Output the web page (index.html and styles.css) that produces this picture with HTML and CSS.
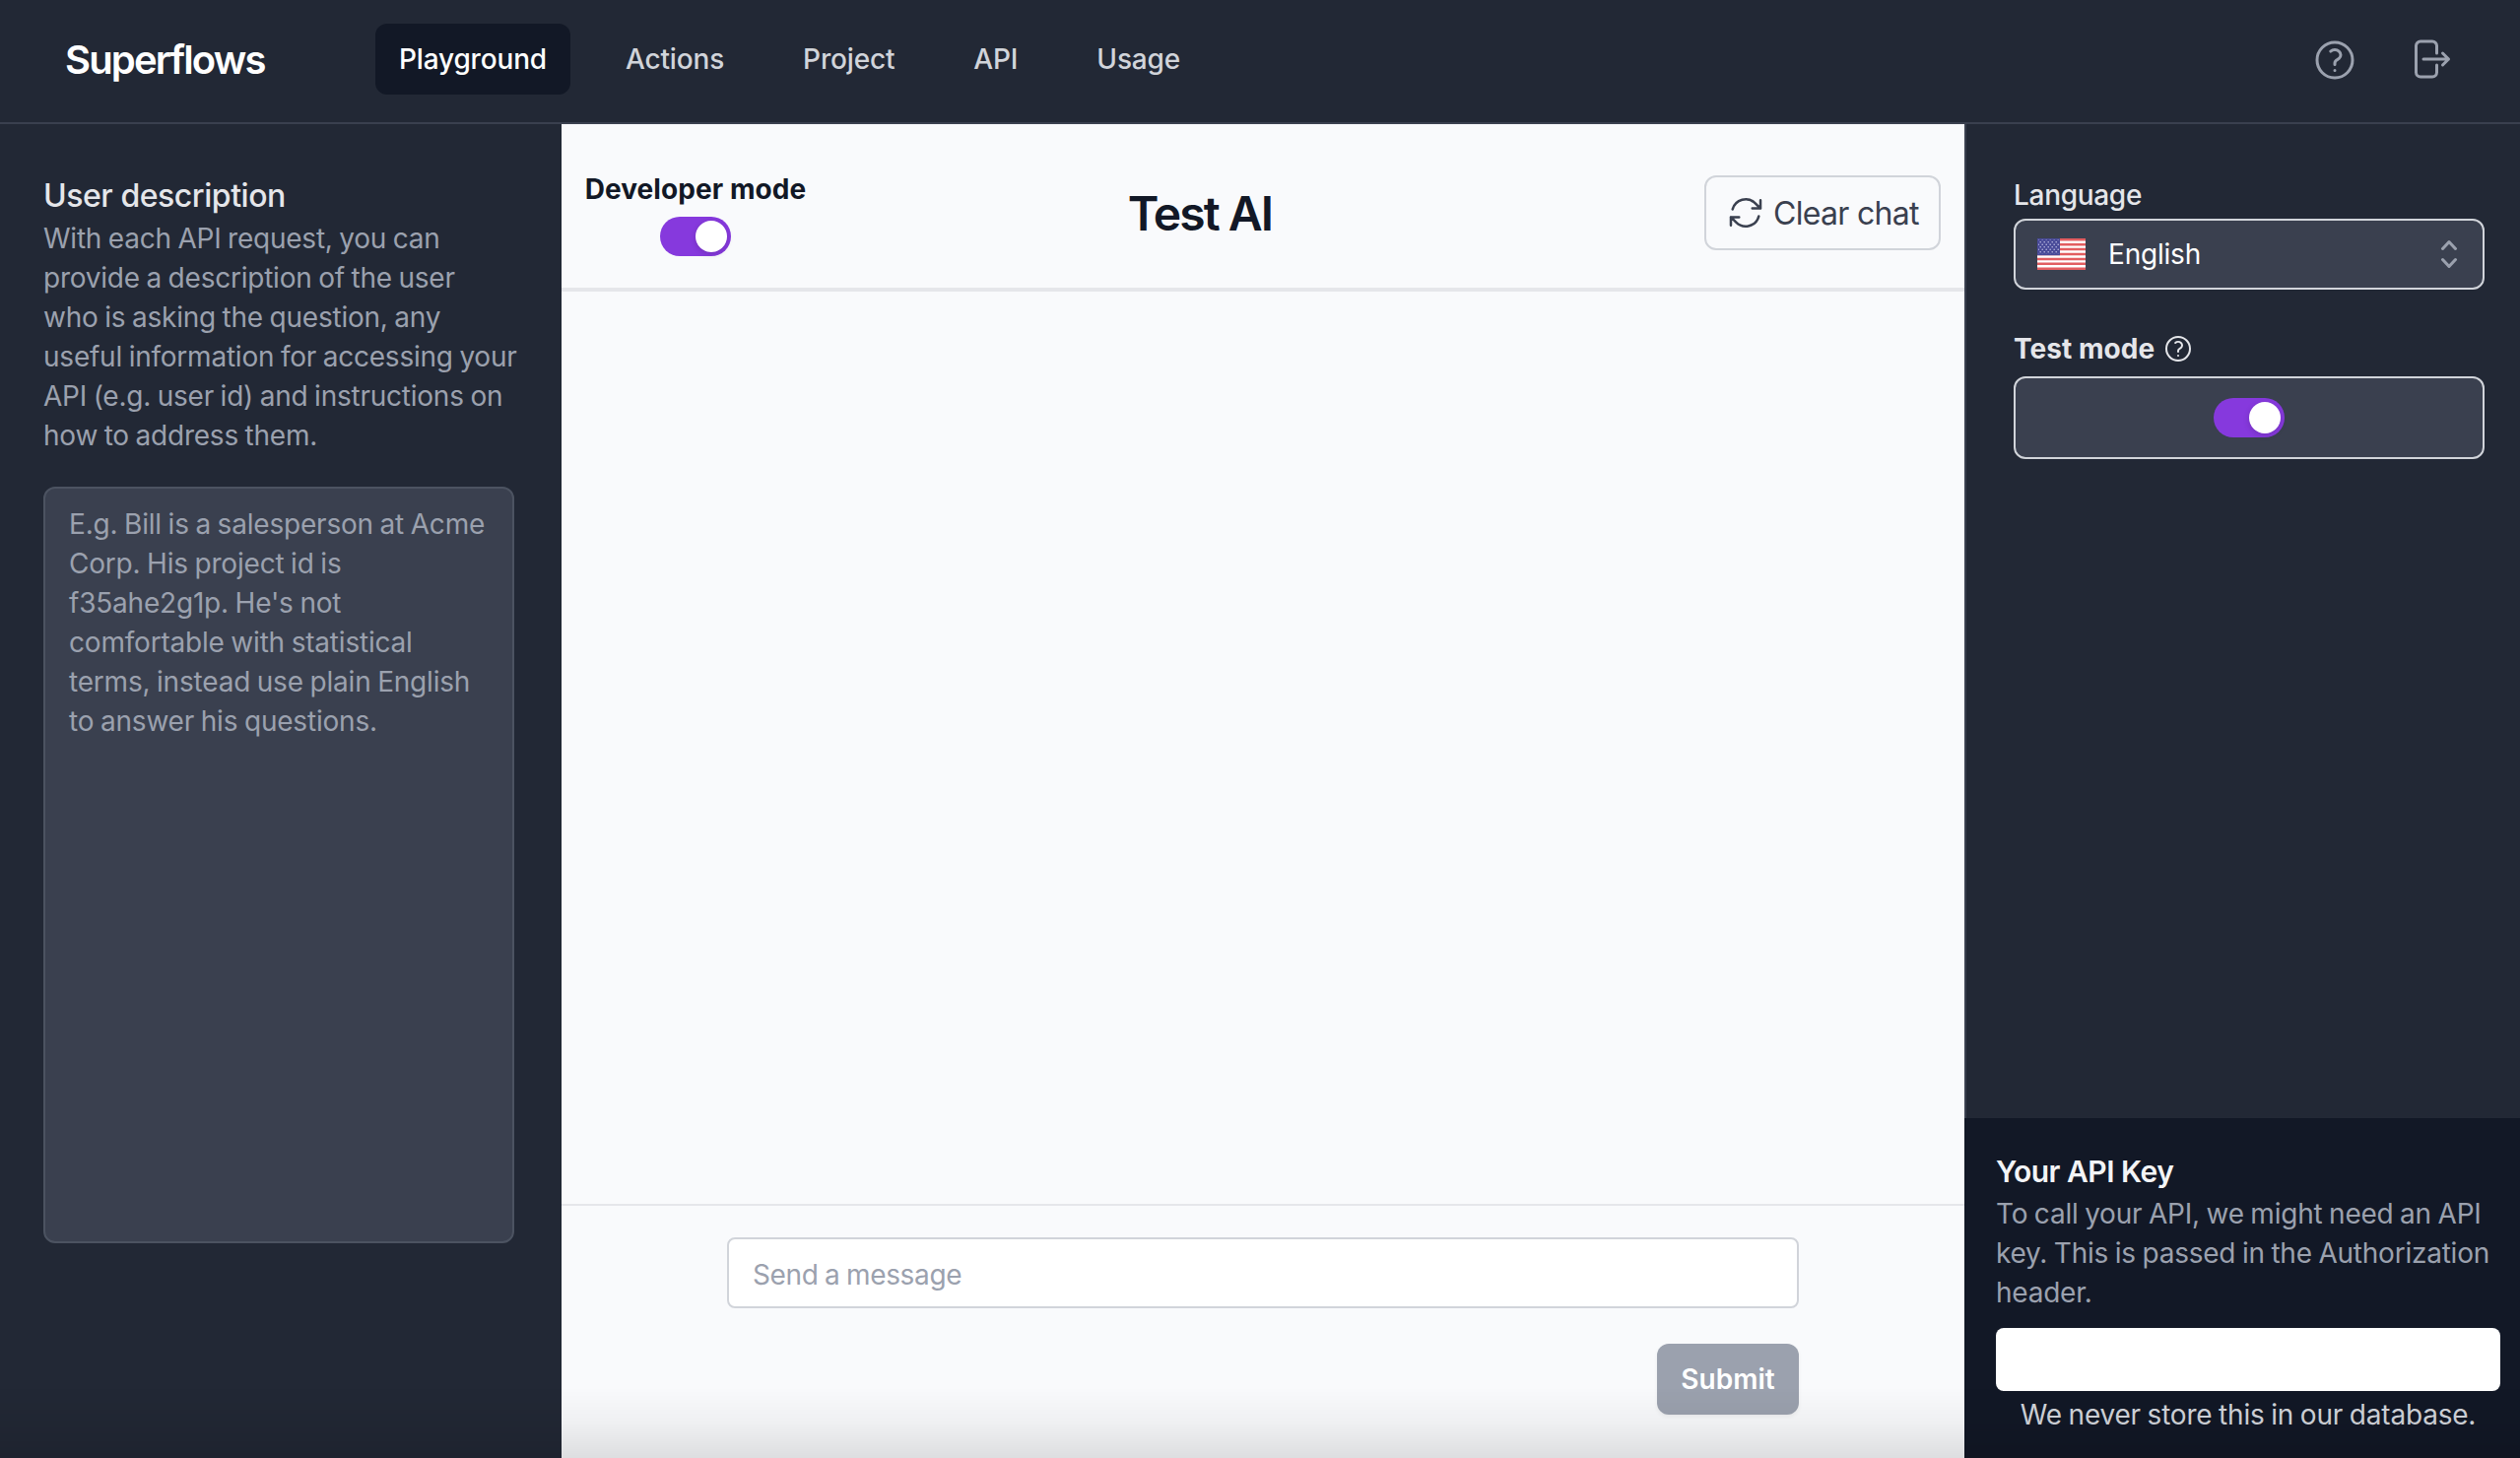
FILE: index.html
```html
<!DOCTYPE html>
<html lang="en">
<head>
<meta charset="utf-8">
<title>Superflows</title>
<link rel="stylesheet" href="styles.css">
</head>
<body>
<svg class="defs" aria-hidden="true">
  <symbol id="question" viewBox="0 0 24 24">
    <path d="M9.879 7.519c1.171-1.025 3.071-1.025 4.242 0 1.172 1.025 1.172 2.687 0 3.712-.203.179-.43.326-.67.442-.745.361-1.45.999-1.45 1.827v.75M21 12a9 9 0 11-18 0 9 9 0 0118 0zm-9 5.25h.008v.008H12v-.008z"/>
  </symbol>
</svg>
<div class="app">
  <header class="navbar">
    <div class="brand">Superflows</div>
    <nav class="nav-links">
      <a class="nav-link active">Playground</a>
      <a class="nav-link">Actions</a>
      <a class="nav-link">Project</a>
      <a class="nav-link">API</a>
      <a class="nav-link">Usage</a>
    </nav>
    <div class="nav-icons">
      <svg class="icon icon-help"><use href="#question"/></svg>
      <svg class="icon icon-logout" viewBox="0 0 24 24"><path d="M15.75 9V5.25A2.25 2.25 0 0013.5 3h-6a2.25 2.25 0 00-2.25 2.25v13.5A2.25 2.25 0 007.5 21h6a2.25 2.25 0 002.25-2.25V15m3 0l3-3m0 0l-3-3m3 3H9"/></svg>
    </div>
  </header>
  <div class="columns">
    <aside class="left-panel">
      <h2 class="panel-title">User description</h2>
      <p class="panel-text">With each API request, you can provide a description of the user<br>who is asking the question, any useful information for accessing your API (e.g. user id) and instructions on<br>how to address them.</p>
      <div class="textarea">E.g. Bill is a salesperson at Acme Corp. His project id is f35ahe2g1p. He's not comfortable with statistical terms, instead use plain English to answer his questions.</div>
    </aside>
    <main class="chat">
      <div class="chat-header">
        <div class="dev-mode">
          <span class="dev-label">Developer mode</span>
          <span class="toggle"><span class="knob"></span></span>
        </div>
        <h1 class="chat-title">Test AI</h1>
        <div class="header-end">
          <button class="clear-button">
            <svg class="icon icon-refresh" viewBox="0 0 24 24"><path d="M16.023 9.348h4.992v-.001M2.985 19.644v-4.992m0 0h4.992m-4.993 0l3.181 3.183a8.25 8.25 0 0013.803-3.7M4.031 9.865a8.25 8.25 0 0113.803-3.7l3.181 3.182m0-4.991v4.99"/></svg>
            <span class="clear-label">Clear chat</span>
          </button>
        </div>
      </div>
      <div class="messages"></div>
      <div class="composer">
        <div class="message-input">Send a message</div>
        <button class="submit">Submit</button>
      </div>
    </main>
    <aside class="right-panel">
      <div class="settings">
        <div class="label language-label">Language</div>
        <div class="select">
          <svg class="flag" viewBox="0 0 49 32" preserveAspectRatio="none">
            <defs>
              <pattern id="stars" width="4" height="5" patternUnits="userSpaceOnUse">
                <circle cx="1.2" cy="1.3" r=".8" fill="#b9bae0"/>
                <circle cx="3.2" cy="3.8" r=".8" fill="#b9bae0"/>
              </pattern>
            </defs>
            <rect width="49" height="32" fill="#fff"/>
            <path d="M0 1.23h49M0 6.15h49M0 11.08h49M0 16h49M0 20.92h49M0 25.85h49M0 30.77h49" stroke="#e25d60" stroke-width="2.46"/>
            <rect width="23" height="17.2" fill="#484a98"/>
            <rect x="1" y="1.5" width="21" height="14" fill="url(#stars)"/>
          </svg>
          <span class="select-value">English</span>
          <svg class="chevrons" viewBox="0 0 20 20"><path d="M10 3a.75.75 0 01.55.24l3.25 3.5a.75.75 0 11-1.1 1.02L10 4.852 7.3 7.76a.75.75 0 01-1.1-1.02l3.25-3.5A.75.75 0 0110 3zm-3.76 9.2a.75.75 0 011.06.04l2.7 2.908 2.7-2.908a.75.75 0 111.1 1.02l-3.25 3.5a.75.75 0 01-1.1 0l-3.25-3.5a.75.75 0 01.04-1.06z"/></svg>
        </div>
        <div class="label test-label"><span class="test-text">Test mode</span><svg class="icon icon-hint"><use href="#question"/></svg></div>
        <div class="toggle-box"><span class="toggle"><span class="knob"></span></span></div>
      </div>
      <section class="api-box">
        <h2 class="api-title">Your API Key</h2>
        <p class="api-text">To call your API, we might need an API key. This is passed in the Authorization header.</p>
        <div class="api-input"></div>
        <p class="api-note">We never store this in our database.</p>
      </section>
    </aside>
  </div>
</div>
<div class="bottom-shade"></div>
</body>
</html>
```
FILE: styles.css
```css
* { box-sizing: border-box; margin: 0; padding: 0; }

body {
  font-family: Inter, "Liberation Sans", sans-serif;
  font-size: 28px;
  line-height: 40px;
  letter-spacing: -.2px;
  word-spacing: -1px;
  color: #121826;
  background: #222835;
}

h1, h2 { word-spacing: 0; }
button { font: inherit; letter-spacing: inherit; border: 0; background: none; }

.defs { display: none; }
.icon { fill: none; stroke: currentColor; stroke-width: 1.5; stroke-linecap: round; stroke-linejoin: round; flex: none; }

.app { display: flex; flex-direction: column; height: 1480px; }

.navbar {
  display: flex;
  height: 126px;
  padding: 24px 68px 28px 66px;
  border-bottom: 2px solid #3a404f;
}
.brand {
  width: 315px;
  font-size: 40px;
  line-height: 74px;
  font-weight: 600;
  letter-spacing: -1.85px;
  color: #fff;
}
.nav-links { display: flex; gap: 32px; }
.nav-link {
  height: 72px;
  padding: 16px 24px;
  border-radius: 12px;
  font-weight: 500;
  letter-spacing: -.16px;
  color: #d1d4da;
}
.nav-link.active { background: #121826; color: #fff; }
.nav-icons { display: flex; gap: 48px; margin-left: auto; padding-top: 12px; color: #9ba1ae; }
.icon-help { width: 48px; height: 48px; margin-top: 1px; }
.icon-logout { width: 48px; height: 48px; }

.columns { display: grid; grid-template-columns: 570px 1424px 564px; flex: 1; min-height: 0; }

.left-panel { padding: 50px 44px 0; }
.panel-title { font-size: 32px; line-height: 46px; font-weight: 500; letter-spacing: -.45px; color: #e5e6ea; }
.panel-text { width: 484px; letter-spacing: -.23px; color: #9ba1ae; }
.textarea {
  width: 478px;
  height: 768px;
  margin-top: 32px;
  padding: 16px 24px;
  border: 2px solid #4c5361;
  border-radius: 12px;
  background: #3a404f;
  color: #9ba1ae;
}

.chat { display: flex; flex-direction: column; background: #f9fafc; }
.chat-header {
  display: grid;
  grid-template-columns: 224px 800px 1fr;
  align-items: center;
  height: 170px;
  padding: 14px 24px 0;
  border-bottom: 4px solid #e5e6ea;
}
.dev-mode { display: flex; flex-direction: column; align-items: center; gap: 8px; }
.dev-label { font-weight: 700; letter-spacing: .08px; word-spacing: 0; white-space: nowrap; }
.chat-title { padding-top: 2px; font-size: 48px; line-height: 64px; font-weight: 600; letter-spacing: -1.95px; text-align: center; }
.header-end { display: flex; justify-content: flex-end; }
.clear-button {
  display: flex;
  align-items: center;
  gap: 8px;
  width: 240px;
  height: 76px;
  padding: 0 20px;
  border: 2px solid #d1d4da;
  border-radius: 12px;
  font-size: 32px;
  letter-spacing: -.7px;
  color: #3a404f;
}
.clear-label { padding-top: 1px; white-space: nowrap; }
.icon-refresh { width: 40px; height: 40px; }

.toggle {
  display: flex;
  justify-content: flex-end;
  width: 72px;
  height: 40px;
  padding: 4px;
  border-radius: 20px;
  background: #8639dd;
}
.knob { width: 32px; height: 32px; border-radius: 50%; background: #fff; box-shadow: 0 2px 6px rgba(0, 0, 0, .15); }

.messages { flex: 1; }
.composer {
  display: flex;
  flex-direction: column;
  align-items: flex-end;
  gap: 36px;
  height: 258px;
  padding: 32px 168px 0;
  border-top: 2px solid #e5e6ea;
}
.message-input {
  width: 1088px;
  height: 72px;
  padding: 16px 24px;
  border: 2px solid #d1d4da;
  border-radius: 8px;
  background: #fff;
  letter-spacing: -.35px;
  color: #9ba1ae;
}
.submit {
  width: 144px;
  height: 72px;
  border-radius: 12px;
  background: #9ba1ae;
  color: #fff;
  font-weight: 600;
  letter-spacing: 0;
  box-shadow: 0 2px 4px rgba(0, 0, 0, .06);
}

.right-panel { display: flex; flex-direction: column; justify-content: space-between; }
.settings { flex: 1; padding: 52px 36px 0 48px; border-left: 2px solid #3a404f; }
.label { color: #e5e6ea; }
.language-label { font-weight: 500; letter-spacing: -.3px; }
.select {
  display: flex;
  align-items: center;
  height: 72px;
  margin-top: 4px;
  padding: 0 14px 0 22px;
  border: 2px solid #d1d4da;
  border-radius: 12px;
  background: #3a404f;
  color: #fff;
}
.flag { width: 49px; height: 32px; margin-right: 23px; }
.chevrons { width: 40px; height: 40px; margin-left: auto; fill: #9ba1ae; }
.test-label { display: flex; align-items: center; gap: 8px; margin-top: 40px; font-weight: 700; letter-spacing: .05px; word-spacing: 0; }
.icon-hint { width: 32px; height: 32px; }
.toggle-box {
  display: flex;
  align-items: center;
  justify-content: center;
  height: 84px;
  margin-top: 8px;
  border: 2px solid #d1d4da;
  border-radius: 12px;
  background: #3a404f;
}

.api-box { height: 345px; padding: 34px 20px 0 32px; background: #121826; }
.api-title { margin-bottom: 3px; font-size: 30px; line-height: 40px; font-weight: 600; letter-spacing: -.5px; color: #f3f4f6; }
.api-text { letter-spacing: -.23px; color: #9ba1ae; }
.api-input { height: 64px; margin-top: 16px; border-radius: 8px; background: #fff; }
.api-note { margin-top: 4px; text-align: center; color: #d1d4da; }

/* Soft darkening along the lower window edge, over all columns */
.bottom-shade {
  position: fixed;
  inset: auto 0 0 0;
  height: 72px;
  background: linear-gradient(rgba(0, 0, 0, 0), rgba(0, 0, 0, .04) 50%, rgba(0, 0, 0, .11));
  pointer-events: none;
}
```
